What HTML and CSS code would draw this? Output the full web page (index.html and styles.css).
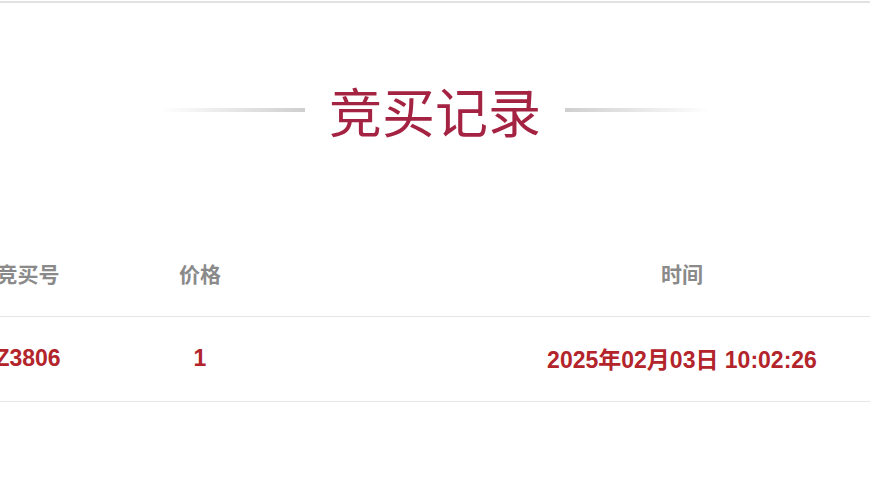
FILE: index.html
```html
<html>
<head>
  <meta charset="UTF-8">
  <title>竞买记录</title>
  <link rel="stylesheet" href="styles.css">
</head>
<body>
<div class="top-line"></div>
<div class="title-box">
  <span class="title-line left"></span>
  <h2 class="title">竞买记录</h2>
  <span class="title-line right"></span>
</div>
<div class="record-table">
  <div class="row head">
    <div class="cell">竞买号</div>
    <div class="cell">价格</div>
    <div class="cell time">时间</div>
  </div>
  <div class="row data">
    <div class="cell">Z3806</div>
    <div class="cell">1</div>
    <div class="cell time">2025年02月03日 10:02:26</div>
  </div>
</div>
</body>
</html>
```

FILE: styles.css
```css
body {
  margin: 0;
  background: #fff;
  font-family: "Liberation Sans", "Noto Sans CJK SC", sans-serif;
  overflow: hidden;
}

.top-line {
  height: 2px;
  margin-top: 1px;
  background-color: #e2e2e2;
}

.title-box {
  display: flex;
  justify-content: center;
  align-items: center;
  gap: 24px;
  margin-top: 77px;
}

.title {
  margin: 0;
  font-family: "Noto Sans CJK SC", sans-serif;
  font-weight: 400;
  font-size: 53px;
  line-height: 60px;
  color: #a52342;
}

.title-line {
  width: 145px;
  height: 4px;
}

.title-line.left {
  background: linear-gradient(to right, rgba(210, 210, 210, 0), #cfcfcf);
}

.title-line.right {
  background: linear-gradient(to right, #cfcfcf, rgba(210, 210, 210, 0));
}

.record-table {
  width: 900px;
  margin-left: -30px;
  margin-top: 90px;
}

.row {
  display: grid;
  grid-template-columns: 116px 228px 556px;
  align-items: center;
  border-bottom: 1px solid #e6e6e6;
  box-sizing: border-box;
}

.cell {
  text-align: center;
  font-weight: bold;
}

.cell.time {
  padding-left: 180px;
}

.head {
  height: 87px;
}

.head .cell {
  color: #8a8a8a;
  font-size: 21px;
}

.data {
  height: 85px;
  padding-bottom: 2px;
}

.data .cell {
  color: #b3242b;
  font-size: 23px;
}
```
